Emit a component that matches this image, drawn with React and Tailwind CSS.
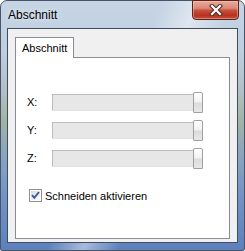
export default function App() {
  const rows = ["X:", "Y:", "Z:"];
  return (
    <div
      className="relative w-[245px] h-[251px] overflow-hidden"
      style={{ fontFamily: '"Liberation Sans", Arial, sans-serif' }}
    >
      <div className="relative w-[245px] h-[251px] rounded-t-[7px] rounded-b-[2px] border border-[#46556a] bg-[linear-gradient(180deg,#c6d4e4_0%,#bfcfe0_20%,#b3c1c6_35%,#a2b4a3_48%,#8aa4bf_62%,#7092c6_80%,#5d80bb_100%)] flex flex-col px-[6px] pb-[7px]">
        {/* glass streaks */}
        <div className="absolute inset-0 bg-[linear-gradient(115deg,transparent_0%,transparent_45%,rgba(255,255,255,0.45)_55%,transparent_65%,transparent_100%)] pointer-events-none rounded-t-[7px]" />
        {/* title bar */}
        <div className="relative h-[27px] flex items-center pl-[1px] pt-[1px]">
          <span className="text-[12px] text-black leading-[14px] [text-shadow:0_0_6px_rgba(255,255,255,0.9)]">
            Abschnitt
          </span>
        </div>
        {/* close button */}
        <div className="absolute top-[-1px] right-[5px] w-[47px] h-[20px] rounded-b-[4px] border border-[#5e2218] bg-[linear-gradient(180deg,#e7ab9c_0%,#d98a79_40%,#c9503b_52%,#b83220_80%,#c2523c_100%)] shadow-[inset_0_0_0_1px_rgba(255,200,190,0.45)] flex items-center justify-center">
          <svg width="14" height="12" viewBox="0 0 14 12">
            <path d="M3 2 L11 10 M11 2 L3 10" stroke="#4a2a24" strokeWidth="4.2" strokeLinecap="square" />
            <path d="M3 2 L11 10 M11 2 L3 10" stroke="#ffffff" strokeWidth="2.2" strokeLinecap="square" />
          </svg>
        </div>
        {/* client area */}
        <div className="relative flex-1 border border-[#3f4d5e] bg-[#f0f0f0] flex flex-col pt-[8px] px-[7px] pb-[3px]">
          {/* tab header */}
          <div className="relative z-10 w-[59px] h-[21px] -mb-[1px] bg-white border border-b-0 border-[#898c95] flex items-center pl-[6px]">
            <span className="text-[11px] text-black leading-[13px]">Abschnitt</span>
          </div>
          {/* tab panel */}
          <div className="flex-1 bg-white border border-[#898c95] flex flex-col pl-[11px] pt-[34px]">
            <div className="flex flex-col gap-[7px]">
              {rows.map((r) => (
                <div key={r} className="flex items-center h-[21px]">
                  <span className="w-[25px] text-[11px] text-black leading-[13px]">{r}</span>
                  <div className="relative w-[150px] h-[21px] flex items-center">
                    <div className="w-[145px] h-[17px] bg-[#e7e7e7] border border-[#bdbdbd] border-b-[#e2e2e2] border-r-[#e2e2e2]" />
                    <div className="absolute left-[141px] top-0 w-[10px] h-[21px] rounded-t-[2px] rounded-b-[1px] border border-[#a0a0a0] bg-[linear-gradient(180deg,#ffffff_0%,#f2f2f2_45%,#dcdcdc_55%,#e8e8e8_100%)]" />
                  </div>
                </div>
              ))}
            </div>
            {/* checkbox */}
            <div className="flex items-center mt-[20px] ml-[2px] h-[13px]">
              <div className="w-[13px] h-[13px] border border-[#8f8f8f] bg-white p-[1px]">
                <div className="w-full h-full bg-[linear-gradient(135deg,#d7dbe1_0%,#eef0f3_60%,#fafafa_100%)] relative">
                  <svg className="absolute -left-[1px] -top-[1px]" width="11" height="11" viewBox="0 0 11 11">
                    <path d="M2 5.2 L4.3 7.8 L9 2" fill="none" stroke="#3a5697" strokeWidth="1.9" />
                  </svg>
                </div>
              </div>
              <span className="ml-[3px] text-[11px] text-black leading-[14px]">Schneiden aktivieren</span>
            </div>
          </div>
        </div>
      </div>
    </div>
  );
}
